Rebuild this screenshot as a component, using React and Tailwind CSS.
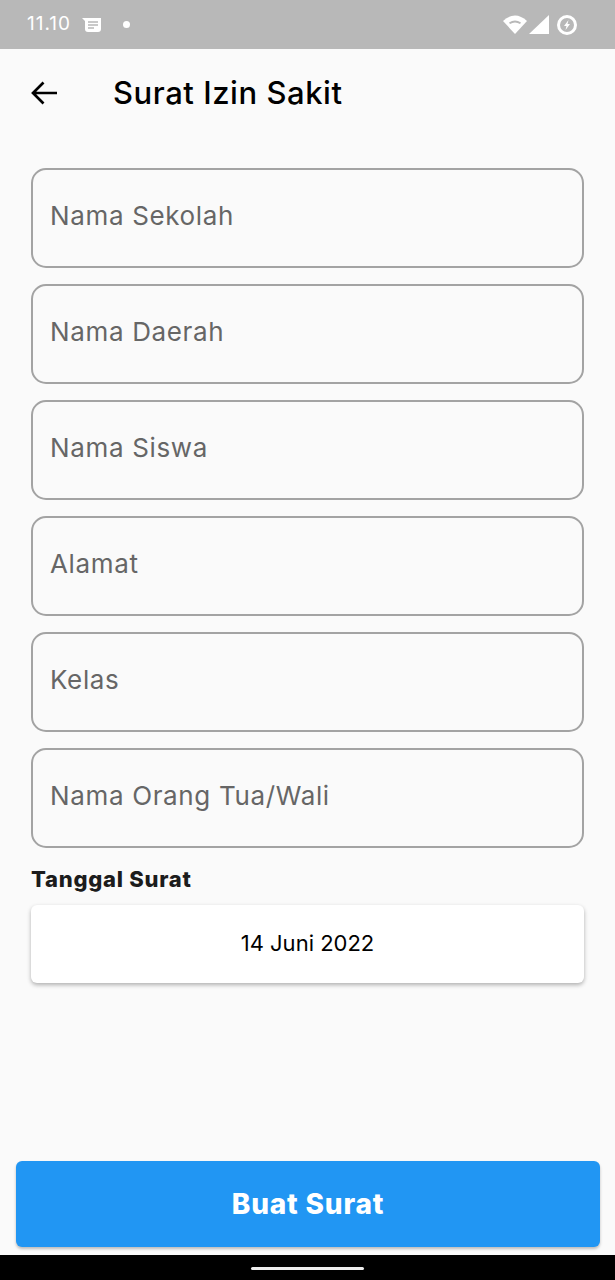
const fields = ["Nama Sekolah", "Nama Daerah", "Nama Siswa", "Alamat", "Kelas", "Nama Orang Tua/Wali"]

export default function App() {
  return (
    <div className="flex h-[1280px] w-[615px] flex-col overflow-hidden bg-[#fafafa] font-['Inter',sans-serif]">
      {/* status bar */}
      <div className="flex h-[49px] items-center justify-between bg-[#b8b8b8] pl-[27px] pr-[37px] text-white">
        <div className="flex items-center">
          <span className="text-[19px] tracking-[1px]">11.10</span>
          <svg className="ml-[11px]" width="20" height="16" viewBox="0 0 20 16">
            <path d="M0 1h19v11a3 3 0 0 1-3 3H6a3 3 0 0 1-3-3V4Z" fill="#fff" />
            <path d="M6 5h10M6 8h10M6 11h6" stroke="#b8b8b8" strokeWidth="1.5" />
          </svg>
          <span className="ml-[21px] h-[7px] w-[7px] rounded-full bg-white" />
        </div>
        <div className="flex items-center">
          <svg width="24" height="19" viewBox="0 0 24 19">
            <path d="M0 6 Q12 -5 24 6 L12 19 Z" fill="#fff" />
            <path d="M6 7.5 Q12 3.5 18 7.5 L17 9 Q12 6 7 9 Z" fill="#b8b8b8" />
          </svg>
          <svg className="ml-[2px]" width="20" height="19" viewBox="0 0 20 19">
            <path d="M20 0V19H0Z" fill="#fff" />
          </svg>
          <svg className="ml-[7px]" width="22" height="22" viewBox="0 0 22 22">
            <circle cx="11" cy="11" r="8.5" fill="none" stroke="#fff" strokeWidth="3" />
            <path d="M12.5 6 8 12h2.5L9.5 16l4.5-6h-2.5Z" fill="#fff" />
          </svg>
        </div>
      </div>

      {/* app bar */}
      <div className="flex h-[88px] items-center pl-[31px]">
        <svg width="26" height="24" viewBox="0 0 26 24" fill="none" stroke="#000" strokeWidth="2.7">
          <path d="M26 12H2M12.5 1.5 2 12l10.5 10.5" />
        </svg>
        <h1 className="ml-[56px] text-[31px] font-medium tracking-[0.55px] text-black">Surat Izin Sakit</h1>
      </div>

      {/* form */}
      <div className="flex flex-1 flex-col px-[31px] pt-[31px]">
        <div className="flex flex-col gap-[16px]">
          {fields.map((f) => (
            <div
              key={f}
              className="flex h-[100px] items-center rounded-[15px] border-2 border-[#a3a3a3] pb-[6px] pl-[17px] text-[26px] tracking-[0.65px] text-[#666666]"
            >
              {f}
            </div>
          ))}
        </div>
        <div className="mt-[17px] text-[22px] font-extrabold leading-[28px] tracking-[0.75px] text-[#1c1c1c]">Tanggal Surat</div>
        <div className="mt-[12px] flex h-[78px] items-center justify-center rounded-[6px] bg-white pb-[2px] text-[22px] text-black shadow-[0_2px_4px_rgba(0,0,0,0.3)]">
          14 Juni 2022
        </div>
      </div>

      {/* button */}
      <div className="pb-[8px] pl-[16px] pr-[15px]">
        <div className="flex h-[86px] items-center justify-center rounded-[6px] bg-[#2196f3] text-[28px] font-extrabold tracking-[0.8px] text-white shadow-[0_2px_3px_rgba(0,0,0,0.25)]">
          Buat Surat
        </div>
      </div>

      {/* nav bar */}
      <div className="flex h-[25px] items-center justify-center bg-black">
        <div className="mt-[2px] h-[3px] w-[113px] rounded-full bg-[#eeeeee]" />
      </div>
    </div>
  )
}
